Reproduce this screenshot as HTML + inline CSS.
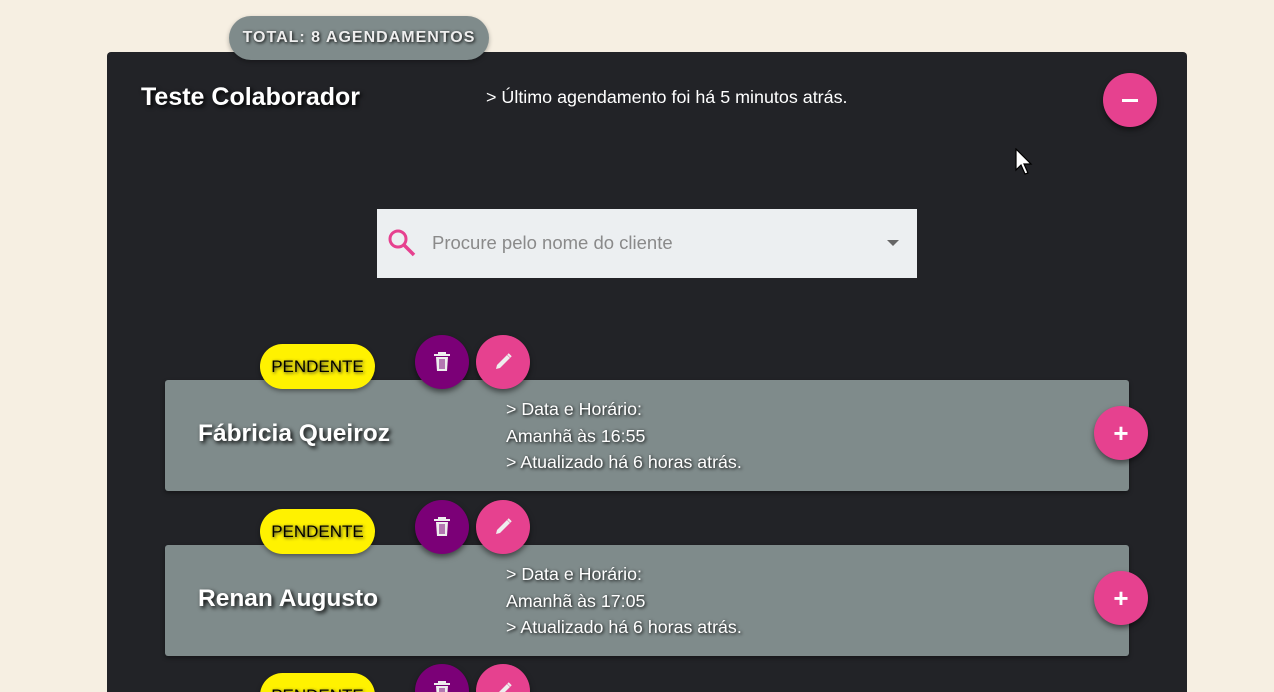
<!DOCTYPE html><html style="width:1274px;height:692px;overflow:hidden"><head><meta charset="utf-8"><style>
body{margin:0;width:1274px;height:692px;overflow:hidden;background:#f6efe2;font-family:"Liberation Sans",Arial,sans-serif;position:relative}
.a{position:absolute}
.panel{left:107px;top:52px;width:1080px;height:640px;background:#222327;border-radius:4px 4px 0 0}
.total{left:229px;top:16px;width:260px;height:44px;border-radius:22px;background:#7f8b8b;color:#eee;font-weight:bold;font-size:16px;letter-spacing:1px;line-height:44px;text-align:center;text-shadow:1px 1px 3px #000;box-shadow:0 2px 5px rgba(0,0,0,.3);z-index:2}
.circ{border-radius:50%;box-shadow:0 3px 6px rgba(0,0,0,.5);display:flex;align-items:center;justify-content:center;color:#fff}
.card{left:165px;width:964px;height:111px;background:#7f8b8b;border-radius:3px;box-shadow:0 2px 4px rgba(0,0,0,.4)}
.name{color:#fff;font-weight:bold;font-size:24.5px;text-shadow:2px 2px 4px #000;white-space:nowrap}
.info{color:#fff;font-size:17.8px;line-height:26.5px;text-shadow:1px 1px 3px #000;white-space:nowrap}
.pend{width:115px;height:45px;border-radius:23px;background:#fff200;font-size:17px;line-height:45px;text-align:center;color:#000;text-shadow:1px 1px 3px #333;box-shadow:0 2px 5px rgba(0,0,0,.4)}
</style></head><body>
<div class="a panel"></div>
<div class="a total">TOTAL: 8 AGENDAMENTOS</div>
<div class="a name" style="left:141px;top:83px;font-size:25px">Teste Colaborador</div>
<div class="a" style="left:486px;top:87px;color:#fff;font-size:17.9px;white-space:nowrap">&gt; Último agendamento foi há 5 minutos atrás.</div>
<div class="a circ" style="left:1103px;top:73px;width:54px;height:54px;background:#e6418f"><div style="width:16px;height:3px;background:#fff"></div></div>
<svg class="a" style="left:1015px;top:148px" width="20" height="28" viewBox="0 0 20 28"><path d="M1 1v21l5-5 4 9 3-1-4-9h7z" fill="#fff" stroke="#000" stroke-width="1.2"/></svg>
<div class="a" style="left:377px;top:209px;width:540px;height:69px;background:#eceff1">
<svg class="a" style="left:10px;top:19px" width="30" height="30" viewBox="0 0 30 30"><circle cx="11" cy="11" r="8" fill="none" stroke="#e6418f" stroke-width="3"/><path d="M17 17l10 10" stroke="#e6418f" stroke-width="3.5"/></svg>
<div class="a" style="left:55px;top:23px;color:#8a8a8a;font-size:18.5px;white-space:nowrap">Procure pelo nome do cliente</div>
<div class="a" style="left:510px;top:31px;width:0;height:0;border-left:6px solid transparent;border-right:6px solid transparent;border-top:6px solid #666"></div>
</div>
<div id="c"></div>
<script>
const data=[[380,"Fábricia Queiroz","16:55"],[545,"Renan Augusto","17:05"]];
let h="";
function btns(y){return `<div class="a pend" style="left:260px;top:${y-36}px">PENDENTE</div>
<div class="a circ" style="left:415px;top:${y-45}px;width:54px;height:54px;background:#7b0077"><svg width="18" height="20" viewBox="0 0 18 20"><path d="M1 3h16M6 3V1h6v2" stroke="#eee" stroke-width="2" fill="none"/><path d="M3 5h12l-1 14H4z" fill="#eee"/><path d="M7 7v10M9 7v10M11 7v10" stroke="#7b0077" stroke-width="1"/></svg></div>
<div class="a circ" style="left:476px;top:${y-45}px;width:54px;height:54px;background:#e6418f"><svg width="20" height="20" viewBox="0 0 20 20"><path d="M3 17l1-4L14 3l3 3L7 16z" fill="#eee"/><path d="M15 2l3 3" stroke="#eee" stroke-width="2"/></svg></div>`;}
for(const [y,n,t] of data){
h+=`<div class="a card" style="top:${y}px"></div>
<div class="a name" style="left:198px;top:${y+40}px">${n}</div>
<div class="a info" style="left:506px;top:${y+16}px">&gt; Data e Horário:<br>Amanhã às ${t}<br>&gt; Atualizado há 6 horas atrás.</div>
<div class="a circ" style="left:1094px;top:${y+26}px;width:54px;height:54px;background:#e6418f;font-size:26px;font-weight:bold">+</div>`+btns(y);}
h+=btns(709);
document.getElementById("c").innerHTML=h;
</script>
</body></html>
